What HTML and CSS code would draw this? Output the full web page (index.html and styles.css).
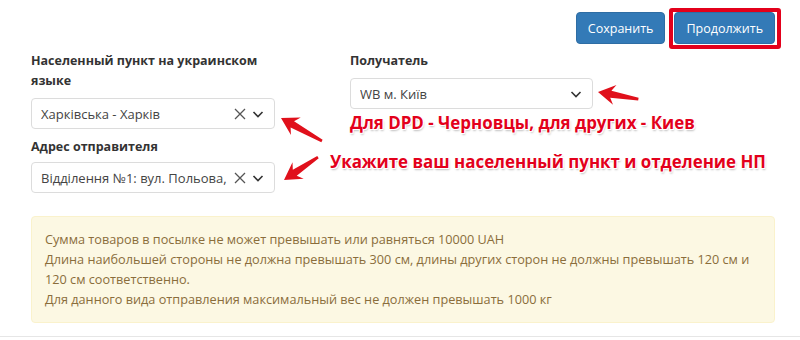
FILE: index.html
```html
<!DOCTYPE html>
<html lang="ru">
  <head>
    <meta charset="UTF-8" />
    <meta name="viewport" content="width=device-width, initial-scale=1.0" />
    <title>Отправка</title>
    <link rel="stylesheet" href="styles.css">
  </head>

  <body>
    <div class="page">
      <!-- top buttons -->
      <div class="toolbar">
        <button class="btn">Сохранить</button>
        <button class="btn btn_marked">Продолжить</button>
      </div>

      <div class="form">
        <div class="col">
          <label class="label">Населенный пункт на украинском языке</label>
          <div class="select">
            <span class="select_text">Харківська - Харків</span>
            <span class="clear">
              <svg width="14" height="14" viewBox="0 0 14 14"><path d="M2 2 L12 12 M12 2 L2 12" stroke="#555" stroke-width="1.3" fill="none"/></svg>
            </span>
            <span class="chevron">
              <svg width="12" height="12" viewBox="0 0 12 12"><path d="M1.5 4 L6 8.5 L10.5 4" stroke="#333" stroke-width="1.6" fill="none"/></svg>
            </span>
          </div>

          <label class="label label_second">Адрес отправителя</label>
          <div class="select">
            <span class="select_text">Відділення №1: вул. Польова,</span>
            <span class="clear">
              <svg width="14" height="14" viewBox="0 0 14 14"><path d="M2 2 L12 12 M12 2 L2 12" stroke="#555" stroke-width="1.3" fill="none"/></svg>
            </span>
            <span class="chevron">
              <svg width="12" height="12" viewBox="0 0 12 12"><path d="M1.5 4 L6 8.5 L10.5 4" stroke="#333" stroke-width="1.6" fill="none"/></svg>
            </span>
          </div>
        </div>

        <div class="col">
          <label class="label">Получатель</label>
          <div class="select">
            <span class="select_text">WB м. Київ</span>
            <span class="chevron">
              <svg width="12" height="12" viewBox="0 0 12 12"><path d="M1.5 4 L6 8.5 L10.5 4" stroke="#333" stroke-width="1.6" fill="none"/></svg>
            </span>
          </div>
        </div>

        <!-- annotations over the form -->
        <div class="note note_top">Для DPD - Черновцы, для других - Киев</div>
        <div class="note note_bottom">Укажите ваш населенный пункт и отделение НП</div>
      </div>

      <div class="alert">
        Сумма товаров в посылке не может превышать или равняться 10000 UAH<br>
        Длина наибольшей стороны не должна превышать 300 см, длины других сторон не должны превышать 120 см и 120 см соответственно.<br>
        Для данного вида отправления максимальный вес не должен превышать 1000 кг
      </div>
    </div>

    <div class="footer_line"></div>

    <!-- red arrows -->
    <svg class="arrows" width="800" height="340" viewBox="0 0 800 340">
      <g transform="translate(281 118) rotate(29.3)">
        <polygon points="0,0 17,-10 13,-3.5 47,-1.3 47,1.3 13,3.5 17,10" fill="#e0101b"/>
      </g>
      <g transform="translate(284 180) rotate(-34)">
        <polygon points="0,0 17,-10 13,-3.5 41,-1.3 41,1.3 13,3.5 17,10" fill="#e0101b"/>
      </g>
      <g transform="translate(598 92) rotate(10)">
        <polygon points="0,0 17,-10 13,-3.5 41,-1.3 41,1.3 13,3.5 17,10" fill="#e0101b"/>
      </g>
    </svg>
  </body>
</html>
```

FILE: styles.css
```css
body {
  margin: 0;
  font-family: "Open Sans", "Noto Sans", sans-serif;
  color: #333;
  background: #fff;
  position: relative;
}

.page {
  padding: 12px 25px 0 31px;
}

.toolbar {
  display: flex;
  justify-content: flex-end;
  gap: 9px;
}

.btn {
  font-family: "Open Sans", sans-serif;
  font-size: 12.5px;
  color: #fff;
  background: #337ab7;
  border: 1px solid #2e6da4;
  border-radius: 4px;
  height: 32px;
  padding: 0 11px;
}

.btn_marked {
  position: relative;
}

/* red frame drawn round the button */
.btn_marked::after {
  content: "";
  position: absolute;
  left: -6px;
  right: -7px;
  top: -5px;
  bottom: -6px;
  border: 4px solid #e3001b;
  border-radius: 3px;
}

.form {
  position: relative;
  display: grid;
  grid-template-columns: 244px 243px;
  column-gap: 75px;
  margin-top: 7px;
}

.col {
  display: flex;
  flex-direction: column;
}

.label {
  font-size: 12.5px;
  font-weight: 700;
  line-height: 20px;
  color: #333;
  margin-bottom: 7px;
}

.label_second {
  margin-top: 8px;
  margin-bottom: 5px;
}

.select {
  display: flex;
  align-items: center;
  height: 31px;
  border: 1px solid #dcdcdc;
  border-radius: 4px;
  padding: 0 10px 0 9px;
  box-sizing: border-box;
  font-size: 13px;
  color: #444;
}

.select_text {
  flex: 1;
  white-space: nowrap;
  overflow: hidden;
}

.clear {
  display: flex;
  margin-left: 6px;
}

.chevron {
  display: flex;
  margin-left: 5px;
}

.note {
  position: absolute;
  font-family: "Open Sans", sans-serif;
  font-weight: 700;
  font-size: 16.9px;
  color: #e3001b;
  white-space: nowrap;
  text-shadow: 1px 1px 0 #fff, -1px -1px 0 #fff, 1px -1px 0 #fff, -1px 1px 0 #fff, 1px 2px 2px rgba(0, 0, 0, 0.25);
}

.note_top {
  left: 319px;
  top: 60px;
}

.note_bottom {
  left: 299px;
  top: 99px;
}

.alert {
  margin-top: 23px;
  background: #fcf8e3;
  border: 1px solid #faf2cc;
  border-radius: 4px;
  padding: 12px 13px 13px 13px;
  font-size: 12.7px;
  line-height: 20px;
  color: #8a6d3b;
}

.footer_line {
  margin-top: 13px;
  border-top: 1px solid #e6e6e6;
}

.arrows {
  position: absolute;
  left: 0;
  top: 0;
  pointer-events: none;
}
```
